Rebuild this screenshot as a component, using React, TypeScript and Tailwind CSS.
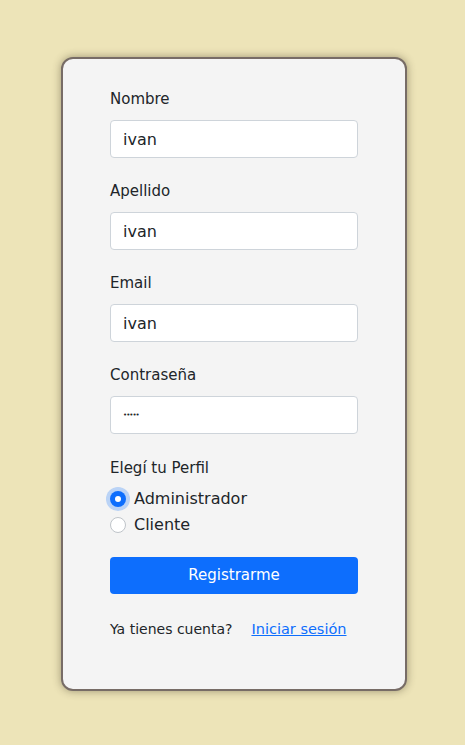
const Field = ({ label, value, type = "text" }: { label: string; value: string; type?: string }) => (
    <div className="flex flex-col">
        <label className="text-[15px] leading-[22px] text-[#212529]">{label}</label>
        <input
            type={type}
            defaultValue={value}
            className={
                type === "password"
                    ? "mt-[10px] h-[38px] w-full rounded-[4px] border border-[#ced4da] bg-white px-[12px] text-[7px] tracking-[-1px] text-[#212529] outline-none"
                    : "mt-[10px] h-[38px] w-full rounded-[4px] border border-[#ced4da] bg-white px-[12px] text-[16px] text-[#212529] outline-none"
            }
        />
    </div>
)

const Radio = ({ label, checked }: { label: string; checked?: boolean }) => (
    <label className="flex items-center gap-[8px] h-[26px]">
        {checked ? (
            <span className="flex h-[16px] w-[16px] items-center justify-center rounded-full bg-[#0d6efd] ring-4 ring-[#0d6efd]/25">
                <span className="h-[6px] w-[6px] rounded-full bg-white" />
            </span>
        ) : (
            <span className="h-[16px] w-[16px] rounded-full border border-[#bfc4c9] bg-white" />
        )}
        <span className="text-[16px] text-[#212529]">{label}</span>
    </label>
)

export default function App() {
    return (
        <div
            className="min-h-[745px] w-full bg-[#ede4b8] pt-[57px]"
            style={{ fontFamily: "'DejaVu Sans', 'Noto Sans', sans-serif" }}
        >
            <form className="ml-[61px] flex w-[346px] flex-col rounded-[12px] border-2 border-[#776c66] bg-[#f4f4f4] px-[47px] pt-[29px] pb-[49px] shadow-[0_0_8px_rgba(60,50,30,0.45)]">
                <div className="flex flex-col gap-[22px]">
                    <Field label="Nombre" value="ivan" />
                    <Field label="Apellido" value="ivan" />
                    <Field label="Email" value="ivan" />
                    <Field label="Contraseña" value="ivan1" type="password" />
                </div>
                <span className="mt-[23px] text-[15px] leading-[22px] text-[#212529]">Elegí tu Perfil</span>
                <div className="mt-[7px] flex flex-col">
                    <Radio label="Administrador" checked />
                    <Radio label="Cliente" />
                </div>
                <button
                    type="button"
                    className="mt-[19px] h-[37px] w-full rounded-[4px] bg-[#0d6efd] text-[15px] font-medium text-white"
                >
                    Registrarme
                </button>
                <div className="mt-[24px] flex items-center gap-[19px] leading-[22px]">
                    <span className="text-[14px] text-[#212529]">Ya tienes cuenta?</span>
                    <a href="#" className="text-[14.5px] text-[#0d6efd] underline">Iniciar sesión</a>
                </div>
            </form>
        </div>
    )
}
